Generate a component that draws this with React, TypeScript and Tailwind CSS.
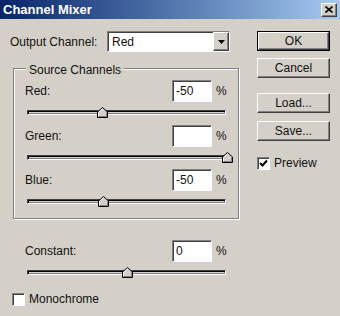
import React from "react";

const raised =
  "border border-white border-r-[#404040] border-b-[#404040] shadow-[inset_-1px_-1px_0_#808080]";
const sunken =
  "border border-[#808080] border-r-white border-b-white shadow-[inset_1px_1px_0_#404040]";

const Thumb = ({ x }: { x: number }) => (
  <svg
    width="11"
    height="11"
    viewBox="0 0 11 11"
    className="absolute top-[-4px]"
    style={{ left: x - 5 }}
  >
    <polygon points="0.5,10.5 0.5,5 5.5,0.5 10.5,5 10.5,10.5" fill="#d4d0c8" stroke="#000" />
    <polyline points="1.5,9.5 1.5,5.5 5.5,1.8" fill="none" stroke="#fff" />
    <polyline points="1.5,9.5 9.5,9.5 9.5,5.5" fill="none" stroke="#808080" />
  </svg>
);

const Slider = ({ pos }: { pos: number }) => (
  <div className="relative ml-[13px] w-[199px] h-[5px] bg-[#d4d0c8] border border-[#404040] border-r-white border-b-white shadow-[inset_1px_1px_0_#000,inset_-1px_-1px_0_#808080]">
    <Thumb x={pos} />
  </div>
);

const Field = ({ label, value }: { label: string; value: string }) => (
  <div className="flex items-center h-[22px] pl-[11px]">
    <span className="w-[147px]">{label}</span>
    <div className={"w-[40px] h-[22px] bg-white flex items-center pl-[3px] " + sunken}>{value}</div>
    <span className="ml-[4px]">%</span>
  </div>
);

const Button = ({ children, primary }: { children: React.ReactNode; primary?: boolean }) => (
  <div className={"w-[73px] h-[20px] " + (primary ? "border border-black" : "")}>
    <div className={"w-full h-full flex items-center justify-center bg-[#d4d0c8] " + raised}>
      {children}
    </div>
  </div>
);

const Check = ({ checked }: { checked?: boolean }) => (
  <div className={"w-[13px] h-[13px] bg-white flex items-center justify-center " + sunken}>
    {checked && (
      <svg width="9" height="9" viewBox="0 0 9 9">
        <path d="M1 4 L3.5 6.5 L8 1.5" fill="none" stroke="#000" strokeWidth="2" />
      </svg>
    )}
  </div>
);

export default function App() {
  return (
    <div className="w-[340px] h-[316px] bg-[#d4d0c8] text-[12px] text-[#111] font-['Liberation_Sans',Arial,sans-serif] overflow-hidden">
      {/* title bar */}
      <div className="h-[19px] flex items-center justify-between pl-[3px] pr-[3px] bg-gradient-to-r from-[#0a246a] to-[#a6caf0]">
        <span className="text-white font-bold text-[13px]">Channel Mixer</span>
        <div className={"w-[16px] h-[14px] bg-[#d4d0c8] flex items-center justify-center " + raised}>
          <svg width="8" height="7" viewBox="0 0 8 7">
            <path d="M0.5 0.5 L7.5 6.5 M7.5 0.5 L0.5 6.5" stroke="#000" strokeWidth="1.6" />
          </svg>
        </div>
      </div>

      <div className="flex">
        {/* left column */}
        <div className="w-[257px]">
          <div className="flex items-center h-[21px] mt-[12px] pl-[10px]">
            <span className="w-[97px]">Output Channel:</span>
            <div className={"w-[123px] h-[21px] bg-white flex items-center justify-between " + sunken}>
              <span className="pl-[4px]">Red</span>
              <div className={"w-[16px] h-full bg-[#d4d0c8] flex items-center justify-center " + raised}>
                <svg width="7" height="4" viewBox="0 0 7 4">
                  <path d="M0 0 H7 L3.5 4 Z" fill="#000" />
                </svg>
              </div>
            </div>
          </div>

          <div className="relative ml-[13px] mt-[16px] w-[226px] h-[151px] border border-[#808080] shadow-[inset_1px_1px_0_#fff,1px_1px_0_#fff] pt-[11px]">
            <span className="absolute top-[-8px] left-[12px] px-[3px] bg-[#d4d0c8]">Source Channels</span>
            <Field label="Red:" value="-50" />
            <div className="mt-[8px] mb-[10px]">
              <Slider pos={74} />
            </div>
            <Field label="Green:" value="" />
            <div className="mt-[8px] mb-[9px]">
              <Slider pos={199} />
            </div>
            <Field label="Blue:" value="-50" />
            <div className="mt-[8px]">
              <Slider pos={75} />
            </div>
          </div>

          <div className="mt-[21px] ml-[14px]">
            <Field label="Constant:" value="0" />
            <div className="mt-[8px]">
              <Slider pos={99} />
            </div>
          </div>

          <div className="flex items-center gap-[4px] mt-[15px] ml-[12px]">
            <Check />
            <span>Monochrome</span>
          </div>
        </div>

        {/* right column */}
        <div className="flex flex-col mt-[12px]">
          <Button primary>OK</Button>
          <div className="mt-[7px]">
            <Button>Cancel</Button>
          </div>
          <div className="mt-[15px]">
            <Button>Load...</Button>
          </div>
          <div className="mt-[8px]">
            <Button>Save...</Button>
          </div>
          <div className="flex items-center gap-[4px] mt-[13px]">
            <Check checked />
            <span>Preview</span>
          </div>
        </div>
      </div>
    </div>
  );
}
